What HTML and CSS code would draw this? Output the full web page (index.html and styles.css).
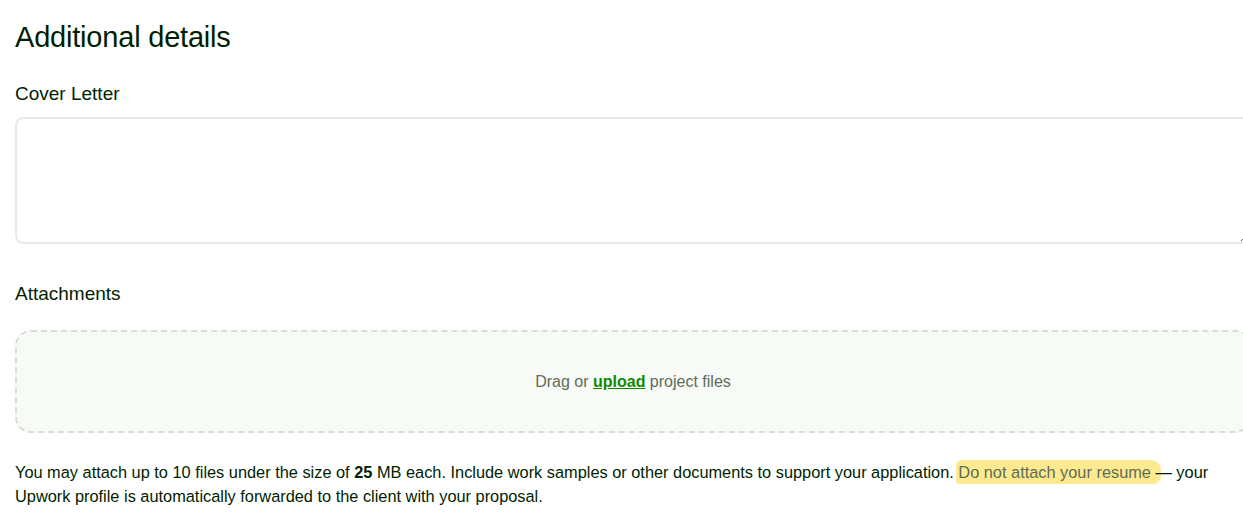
FILE: index.html
```html
<!DOCTYPE html>
<html lang="en">
<head>
    <meta charset="UTF-8">
    <meta name="viewport" content="width=device-width, initial-scale=1.0">
    <title>Additional details</title>
    <link rel="stylesheet" href="styles.css">
</head>
<body>

<div class="details">
    <h2>Additional details</h2>

    <label for="coverLetter">Cover Letter</label>
    <textarea id="coverLetter" name="coverLetter" rows="5"></textarea>

    <label class="attach-label">Attachments</label>
    <div class="dropzone">
        <span>Drag or <a href="#">upload</a> project files</span>
    </div>

    <p class="note">You may attach up to 10 files under the size of <strong>25</strong> MB each. Include work samples or other documents to support your application. <mark>Do not attach your resume </mark>&mdash; your Upwork profile is automatically forwarded to the client with your proposal.</p>
</div>

</body>
</html>
```

FILE: styles.css
```css
body {
    font-family: "Liberation Sans", Arial, sans-serif;
    margin: 0;
    padding: 0;
    background-color: #fff;
    color: #001e00;
    overflow-x: hidden;
}

.details {
    width: 1236px;
    padding: 20px 15px 0;
}

h2 {
    font-size: 29px;
    line-height: 34px;
    font-weight: 400;
    margin: 0 0 29px;
    letter-spacing: -0.2px;
}

label {
    display: block;
    font-size: 19px;
    line-height: 22px;
    margin-bottom: 12px;
}

textarea {
    display: block;
    box-sizing: border-box;
    width: 100%;
    height: 127px;
    border: 2px solid #e4ebe4;
    border-radius: 8px;
    margin: 0 0 39px;
    padding: 8px 12px;
    font: inherit;
}

.attach-label {
    margin-bottom: 25px;
}

.dropzone {
    box-sizing: border-box;
    height: 103px;
    border: 2px dashed #d5e0d5;
    border-radius: 16px;
    background-color: #f7faf7;
    display: flex;
    align-items: center;
    justify-content: center;
    color: #5e6d55;
    font-size: 16px;
}

.dropzone a {
    color: #108a00;
    font-weight: bold;
    text-decoration: underline;
}

.note {
    font-size: 16.35px;
    line-height: 24px;
    margin: 27px 0 0;
    width: 1210px;
}

.note strong {
    font-weight: 600;
}

mark {
    background-color: #fde98f;
    color: #5e6d55;
    border-radius: 6px 10px 8px 4px;
    padding: 3px 6px 3px 2px;
    margin: 0 -6px 0 -2px;
}
```
